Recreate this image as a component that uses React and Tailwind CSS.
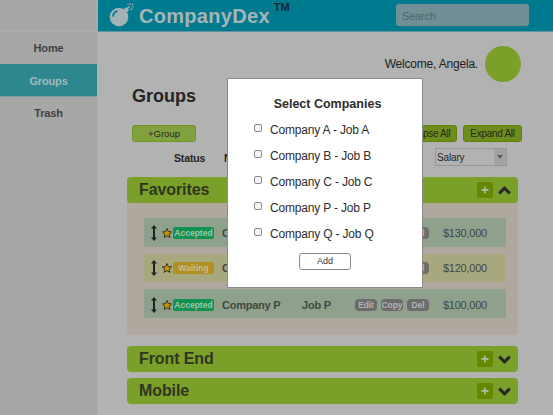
import React from "react";

function Bomb() {
  return (
    <svg className="block h-[26px] w-[26px]" viewBox="0 0 26 26" fill="none">
      <circle cx="10" cy="15" r="9.300" fill="#a3b2b4" />
      <path d="M14.500 7.500l3-2.400 2.600 2.600-2.400 3z" fill="#a3b2b4" />
      <path d="M4 14c.4-2.400 1.700-4 3.800-4.700" stroke="#007a8f" strokeWidth="1.600" strokeLinecap="round" />
      <path d="M18.500 6.500c.6-1.300 1.500-1.800 2.700-1.500" stroke="#a3b2b4" strokeWidth="1.200" />
      <path d="M18.500 1.800l1.300 1M21.500 1.200v1.800M24.300 1.800l-1.300 1.400M22.800 4.800h1.700M21.800 6.500l1.500 1.500" stroke="#8fabb0" strokeWidth="1.200" />
    </svg>
  );
}

function MoveArrow() {
  return (
    <svg className="block h-4 w-[6px] shrink-0" viewBox="0 0 6 16">
      <path d="M3 0l3 3.600H4v8.800h2L3 16l-3-3.600h2V3.600H0z" fill="#202426" />
    </svg>
  );
}

function Star() {
  return (
    <svg className="block h-[10px] w-[10px] shrink-0 overflow-visible" viewBox="0 0 10 10">
      <path d="M5 .5l1.300 3.100 3.300.3-2.500 2.200.8 3.300L5 7.700 2.100 9.400l.8-3.300L.4 3.900l3.300-.3z" fill="#c79a00" stroke="#2c2a18" strokeWidth=".9" strokeLinejoin="round" />
    </svg>
  );
}

function Chevron({ up }) {
  return (
    <svg className="block h-[9px] w-[13px]" viewBox="0 0 13 9" fill="none">
      <path d={up ? "M1.200 7.400L6.500 2.200l5.300 5.200" : "M1.200 1.600l5.300 5.200 5.300-5.200"} stroke="#272727" strokeWidth="3" />
    </svg>
  );
}

function GroupBar({ name, open }) {
  return (
    <div className="flex h-[26px] items-center rounded-[4px] bg-[#7aa029] pr-[7px] pl-3">
      <span className="flex-1 text-[16px] leading-[26px] font-bold tracking-[-0.1px] text-[#30351f]">{name}</span>
      <span className="mr-[5px] flex h-4 w-4 items-center justify-center rounded-[2px] bg-[#648800]">
        <svg className="h-2 w-2" viewBox="0 0 8 8">
          <path d="M4 .5v7M.5 4h7" stroke="#b0b5a2" strokeWidth="1.800" />
        </svg>
      </span>
      <Chevron up={open} />
    </div>
  );
}

function Pill({ children, className }) {
  return (
    <span className={"flex h-3 items-center justify-center rounded-[4px] bg-[#6c6c6c] text-[8.5px] leading-none font-bold tracking-[-0.1px] text-[#b0b0b0] " + className}>
      {children}
    </span>
  );
}

function CompanyRow({ company, job, salary, waiting, className }) {
  return (
    <div className={"flex items-center pl-[7px] " + (waiting ? "h-[28px] bg-[#a7a87e] " : "h-[29px] bg-[#8fa08d] ") + className}>
      <MoveArrow />
      <span className="ml-[5px]"><Star /></span>
      <span className={"ml-px flex h-3 w-[41px] items-center justify-center rounded-[2px] text-[8.5px] leading-none font-bold " + (waiting ? "bg-[#b28f22] text-[#c5bd91]" : "bg-[#12924f] text-[#9fc5ad]")}>
        {waiting ? "Waiting" : "Accepted"}
      </span>
      <span className="ml-2 w-20 text-[11px] font-bold tracking-[-0.25px] text-[#414943]">{company}</span>
      <span className="w-[53px] text-[11px] font-bold tracking-[-0.2px] text-[#414943]">{job}</span>
      <Pill className="w-[22px]">Edit</Pill>
      <Pill className="ml-1 w-[22px]">Copy</Pill>
      <Pill className="ml-1 w-[22px]">Del</Pill>
      <span className="ml-[14px] text-[11px] tracking-[-0.25px] text-[#3f4741]">{salary}</span>
    </div>
  );
}

const choices = ["A", "B", "C", "P", "Q"];

function SelectDialog() {
  return (
    <div role="dialog" className="absolute top-[78px] left-[227px] flex h-[210px] w-[196px] flex-col items-center border border-[#8b8b8b] bg-white">
      <h2 className="mt-[17px] ml-[5px] text-[12.5px] leading-4 font-bold text-[#2d2d2d]">Select Companies</h2>
      <div className="mt-[5px] w-full pl-[26px]">
        {choices.map((c) => (
          <label key={c} className="flex h-[26px] items-center text-[12px] tracking-[-0.18px] text-[#2d2d2d]">
            <input type="checkbox" className="mr-2 mb-1 h-2 w-2 appearance-none rounded-[2px] border border-[#8b8b8b] bg-[#f4f4f4]" />
            Company {c} - Job {c}
          </label>
        ))}
      </div>
      <button className="mt-[6px] h-[17px] w-[52px] rounded-[3px] border border-[#8a8a8a] bg-white text-[9px] leading-none text-[#333]">Add</button>
    </div>
  );
}

export default function App() {
  return (
    <div className="relative flex h-[415px] w-[553px] overflow-hidden bg-[#b2b2b2] font-['Liberation_Sans',Arial,sans-serif] text-[#252525]">
      <aside className="w-[98px] shrink-0 border-r border-[#aeaeae] bg-[#a7a7a7] text-center text-[11px] font-bold tracking-[-0.15px] text-[#414141]">
        <div className="h-8 border-b border-[#adadad]" />
        <div className="h-8 leading-8">Home</div>
        <div className="h-[33px] border-b border-[#79a0a2] bg-[#2d878e] leading-[34px] text-[#a3b9bb]">Groups</div>
        <div className="h-8 leading-8">Trash</div>
      </aside>
      <div className="min-w-0 flex-1">
        <header className="flex h-8 items-start border-b border-[#62959e] bg-[#007a8f] pl-[11px]">
          <div className="mt-[2px]"><Bomb /></div>
          <span className="ml-1 text-[20px] leading-[32px] font-bold tracking-[0.3px] text-[#a6b5b7]">CompanyDex</span>
          <span className="ml-[4px] text-[11px] leading-[14px] font-bold text-[#102b30]">TM</span>
          <div className="mt-1 mr-6 ml-auto h-[22px] w-[133px] rounded-[3px] bg-[#718f94] pl-[6px] text-[11px] leading-6 tracking-[-0.2px] text-[#4b686d]">Search</div>
        </header>
        <main className="pl-[29px]">
          <div className="flex h-[50px] items-end justify-end pr-8">
            <span className="mr-[7px] text-[12px] leading-[35px] tracking-[-0.2px] text-[#202020]">Welcome, Angela.</span>
            <span className="h-9 w-9 rounded-full bg-[#7aa029]" />
          </div>
          <h1 className="mt-[2px] pl-[5px] text-[18px] leading-6 font-bold text-[#252525]">Groups</h1>
          <div className="mt-[17px] flex h-[17px] items-start pr-[31px] pl-[5px] text-[10px] leading-[15px]">
            <button className="h-[17px] w-16 rounded-[3px] border border-[#72951f] bg-[#81a03e] text-[9.5px] text-[#282828]">+Group</button>
            <button className="ml-auto h-[17px] w-[62px] rounded-[3px] border border-[#5f8200] bg-[#6f8d1f] tracking-[-0.3px] text-[#252a18]">Collapse All</button>
            <button className="ml-[6px] h-[17px] w-[59px] rounded-[3px] border border-[#5f8200] bg-[#6f8d1f] tracking-[-0.3px] text-[#252a18]">Expand All</button>
          </div>
          <div className="mt-[6px] flex h-[18px] items-center pl-[47px] text-[10.5px] font-bold tracking-[-0.15px]">
            <span className="w-[50px] pt-1">Status</span>
            <span className="pt-1">Name</span>
            <div className="mr-[46px] ml-auto flex h-[18px] w-[72px] items-center border border-[#979797] bg-[#b2b2b2] pl-px font-normal">
              <span className="flex-1 text-[10px]">Salary</span>
              <span className="flex h-4 w-3 items-center justify-center bg-[#a2a2a2]">
                <span className="border-x-[3px] border-t-4 border-x-transparent border-t-[#606060]" />
              </span>
            </div>
          </div>
          <div className="mt-[11px] flex w-[391px] flex-col">
            <section className="rounded-[4px] bg-[#aea89f]">
              <GroupBar name="Favorites" open />
              <div className="flex flex-col gap-[7px] pt-[15px] pr-3 pb-[17px] pl-[17px]">
                <CompanyRow company="Company A" job="Job A" salary="$130,000" className="pt-px" />
                <CompanyRow company="Company B" job="Job B" salary="$120,000" className="pt-0" waiting />
                <CompanyRow company="Company P" job="Job P" salary="$100,000" className="pt-[3px]" />
              </div>
            </section>
            <div className="mt-[11px]"><GroupBar name="Front End" /></div>
            <div className="mt-[6px]"><GroupBar name="Mobile" /></div>
          </div>
        </main>
      </div>
      <SelectDialog />
    </div>
  );
}
